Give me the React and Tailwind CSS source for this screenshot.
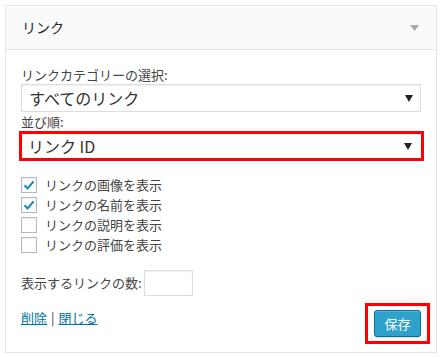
import React from "react";

const Arrow = () => (
  <svg width="8" height="7" viewBox="0 0 8 7" className="shrink-0">
    <path d="M0 0 H8 L4 7 Z" fill="#222" />
  </svg>
);

const Check = () => (
  <svg width="12" height="12" viewBox="0 0 12 12">
    <path d="M1.5 6.2 L4.6 9.4 L10.6 2.4" stroke="#1e8cbe" strokeWidth="2.2" fill="none" />
  </svg>
);

function CheckRow({ checked, label }) {
  return (
    <div className="flex items-center h-[20px]">
      <span className="w-[16px] h-[16px] border border-[#b4b9be] bg-white flex items-center justify-center shadow-[inset_0_1px_2px_rgba(0,0,0,0.07)]">
        {checked && <Check />}
      </span>
      <span className="ml-[8px] text-[13px] text-[#444]">{label}</span>
    </div>
  );
}

export default function App() {
  return (
    <div
      className="w-[443px] h-[357px] bg-white pt-[5px] pl-[5px]"
      style={{ fontFamily: '"Noto Sans CJK JP", "Noto Sans", sans-serif' }}
    >
      <div className="w-[432px] border border-[#e5e5e5] bg-white">
        <div className="h-[44px] bg-[#fafafa] border-b border-[#e5e5e5] flex items-center justify-between pl-[16px] pr-[17px]">
          <span className="text-[14px] text-[#23282d]">リンク</span>
          <svg width="9" height="6" viewBox="0 0 9 6">
            <path d="M0 0 H9 L4.5 6 Z" fill="#b3a6a9" />
          </svg>
        </div>
        <div className="px-[15px] pt-[16px] pb-[15px] flex flex-col">
          <div className="h-[18px] leading-[18px] text-[13px] text-[#444]">リンクカテゴリーの選択:</div>
          <div className="h-[28px] border border-[#ddd] bg-white flex items-center justify-between pl-[7px] pr-[7px] shadow-[inset_0_1px_2px_rgba(0,0,0,0.07)]">
            <span className="text-[16px] text-[#333]">すべてのリンク</span>
            <Arrow />
          </div>
          <div className="h-[18px] leading-[18px] text-[13px] text-[#444] mt-[1px]">並び順:</div>
          <div className="h-[30px] border-[3px] border-[#ff0000] ml-[-2px] mr-[-3px] bg-white flex items-center justify-between pl-[6px] pr-[9px]">
            <span className="text-[16px] text-[#333]">リンク ID</span>
            <Arrow />
          </div>
          <div className="mt-[14px] flex flex-col">
            <CheckRow checked label="リンクの画像を表示" />
            <CheckRow checked label="リンクの名前を表示" />
            <CheckRow label="リンクの説明を表示" />
            <CheckRow label="リンクの評価を表示" />
          </div>
          <div className="mt-[15px] flex items-center">
            <span className="text-[13px] text-[#444]">表示するリンクの数:</span>
            <span className="ml-[2px] w-[49px] h-[26px] border border-[#ddd] bg-white shadow-[inset_0_1px_2px_rgba(0,0,0,0.07)]"></span>
          </div>
          <div className="mt-[14px] flex justify-between items-start">
            <div className="text-[13px] text-[#444] mt-[-2px]">
              <span className="text-[#0074a2] underline">削除</span>
              <span className="mx-[4px]">|</span>
              <span className="text-[#0074a2] underline">閉じる</span>
            </div>
            <div className="relative">
              <span className="absolute left-[-9px] right-[-9px] top-[-7px] bottom-[-7px] border-[3px] border-[#ff0000]"></span>
              <button className="relative w-[47px] h-[27px] bg-[#2ea2cc] border border-[#0074a2] rounded-[3px] text-white text-[13px] shadow-[inset_0_1px_0_rgba(120,200,230,0.5),0_1px_0_rgba(0,0,0,0.15)] flex items-center justify-center">
                保存
              </button>
            </div>
          </div>
        </div>
      </div>
    </div>
  );
}
